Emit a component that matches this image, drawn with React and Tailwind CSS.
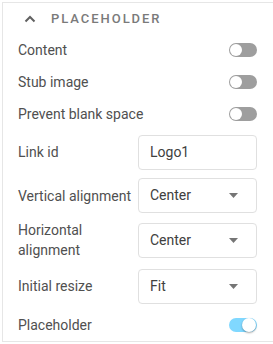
import React, { useState } from 'react';

function Toggle({ on }) {
  return (
    <div className={"relative w-[28px] h-[14px] rounded-full " + (on ? "bg-[#80d8ff]" : "bg-[#9e9e9e]")}>
      {on ? (
        <div className="absolute right-[1px] top-[0px] w-[14px] h-[14px] rounded-full bg-white shadow-[0_1px_2px_rgba(0,0,0,0.35)]" />
      ) : (
        <div className="absolute left-[1px] top-[1px] w-[12px] h-[12px] rounded-full bg-white" />
      )}
    </div>
  );
}

function Caret() {
  return (
    <svg width="9" height="5" viewBox="0 0 9 5" className="ml-auto mr-[18px]">
      <path d="M0 0 L9 0 L4.5 5 Z" fill="#757575" />
    </svg>
  );
}

function ToggleRow({ label, on }) {
  return (
    <div className="h-8 flex items-center justify-between">
      <span>{label}</span>
      <Toggle on={on} />
    </div>
  );
}

function FieldRow({ label, value, select, h }) {
  return (
    <div className={"flex items-center " + h}>
      <div className="w-[120px] leading-5">{label}</div>
      <div className="w-[119px] h-[35px] border border-[#e0e0e0] rounded-[4px] flex items-center pl-[11px] text-[#404040]">
        <span>{value}</span>
        {select && <Caret />}
      </div>
    </div>
  );
}

export default function App() {
  const [open] = useState(true);

  return (
    <div className="w-[273px] h-[344px] bg-white pt-[2px] overflow-hidden" style={{ fontFamily: 'Roboto, "Liberation Sans", sans-serif' }}>
      <div className="ml-[2px] border-l border-t border-b border-[#e6e6e6] pl-[15px] pr-4 text-[14px] text-[#505050]">
        {/* Header */}
        <div className="h-[31px] flex items-center">
          <svg width="12" height="8" viewBox="0 0 12 8" className="ml-[6px]">
            <polyline points="1.5,6.5 6,2 10.5,6.5" fill="none" stroke="#616161" strokeWidth="2" />
          </svg>
          <span className="ml-[15px] text-[13px] font-medium tracking-[0.15em] text-[#7a7a7a]">PLACEHOLDER</span>
        </div>

        {open && (
          <div>
            <ToggleRow label="Content" on={false} />
            <ToggleRow label="Stub image" on={false} />
            <ToggleRow label="Prevent blank space" on={false} />
            <FieldRow label="Link id" value="Logo1" h="h-[44px]" />
            <FieldRow label="Vertical alignment" value="Center" select h="h-[43px]" />
            <FieldRow label={<>Horizontal<br />alignment</>} value="Center" select h="h-[46px]" />
            <FieldRow label="Initial resize" value="Fit" select h="h-[46px]" />
            <ToggleRow label="Placeholder" on={true} />
          </div>
        )}
      </div>
    </div>
  );
}
